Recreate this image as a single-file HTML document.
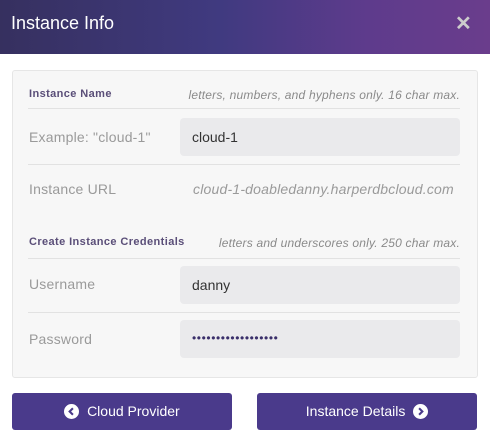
<!DOCTYPE html>
<html><head><style>
body{margin:0;width:490px;height:444px;background:#fff;font-family:"Liberation Sans",sans-serif;position:relative;overflow:hidden}
.hdr{position:absolute;left:0;top:0;width:490px;height:54px;background:linear-gradient(90deg,#36305f 0%,#403a80 45%,#5e3b8c 75%,#6a3d8c 100%)}
.hdr .t{position:absolute;left:11px;top:13px;color:#fff;font-size:18px}
.hdr .x{position:absolute;left:455px;top:11px;color:#ccc;font-size:20px;font-weight:bold}
.card{position:absolute;left:12px;top:70px;width:464px;height:306px;background:#f7f7f7;border:1px solid #e6e6e6;border-radius:3px}
.a{position:absolute;font-size:14px;color:#9a9a9a;letter-spacing:0.2px}
.h{position:absolute;font-size:11px;font-weight:bold;color:#5a4e78;letter-spacing:0.4px}
.i{position:absolute;font-size:12px;font-style:italic;color:#8a8a8a;letter-spacing:0.2px}
.ln{position:absolute;left:28px;width:432px;height:1px;background:#e2e2e2}
.inp{position:absolute;left:180px;width:280px;height:38px;background:#eaeaec;border-radius:4px}
.inp span{position:absolute;left:12px;top:11px;font-size:14px;color:#333}
.btn{position:absolute;top:393px;width:220px;height:37px;background:#4a3a8b;border-radius:3px;color:#fff;font-size:14px;text-align:center;line-height:37px}
.btn svg{vertical-align:-3px}
</style></head><body>
<div class="hdr"><div class="t">Instance Info</div><div class="x">✕</div></div>
<div class="card"></div>
<div class="h" style="left:29px;top:88px">Instance Name</div>
<div class="i" style="right:30px;top:88px">letters, numbers, and hyphens only. 16 char max.</div>
<div class="ln" style="top:108px"></div>
<div class="a" style="left:29px;top:129px">Example: "cloud-1"</div>
<div class="inp" style="top:118px"><span>cloud-1</span></div>
<div class="ln" style="top:164px"></div>
<div class="a" style="left:29px;top:181px">Instance URL</div>
<div class="a" style="left:193px;top:181px;font-style:italic">cloud-1-doabledanny.harperdbcloud.com</div>
<div class="h" style="left:29px;top:236px">Create Instance Credentials</div>
<div class="i" style="right:30px;top:236px">letters and underscores only. 250 char max.</div>
<div class="ln" style="top:258px"></div>
<div class="a" style="left:29px;top:276px">Username</div>
<div class="inp" style="top:266px"><span>danny</span></div>
<div class="ln" style="top:312px"></div>
<div class="a" style="left:29px;top:331px">Password</div>
<div class="inp" style="top:320px"><span style="font-size:12px;top:11px;color:#3a2f6a;letter-spacing:0.6px">••••••••••••••••••</span></div>
<div class="btn" style="left:12px"><svg width="15" height="15" viewBox="0 0 16 16"><circle cx="8" cy="8" r="8" fill="#fff"/><path d="M9.5 4.5L6 8l3.5 3.5" stroke="#4a3a8b" stroke-width="2.2" fill="none"/></svg>&nbsp; Cloud Provider</div>
<div class="btn" style="left:257px">Instance Details &nbsp;<svg width="15" height="15" viewBox="0 0 16 16"><circle cx="8" cy="8" r="8" fill="#fff"/><path d="M6.5 4.5L10 8l-3.5 3.5" stroke="#4a3a8b" stroke-width="2.2" fill="none"/></svg></div>
</body></html>
